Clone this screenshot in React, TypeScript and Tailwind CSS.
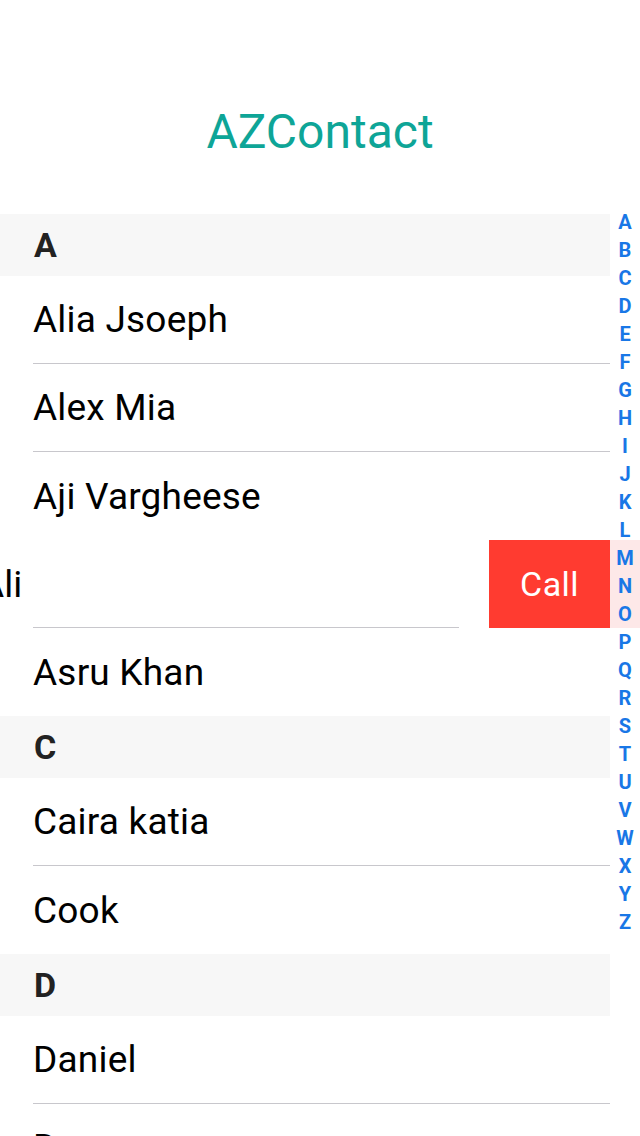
import React from 'react';

const letters = 'ABCDEFGHIJKLMNOPQRSTUVWXYZ'.split('');

function Header({ letter }: { letter: string }) {
  return (
    <div className="h-[62px] bg-[#f7f7f7] flex items-center pl-[34px]">
      <span className="text-[34px] font-bold text-[#222222] leading-none">{letter}</span>
    </div>
  );
}

function Row({ name, last }: { name: string; last?: boolean }) {
  return (
    <div className="h-[88px] pl-[33px] bg-white">
      <div className={`h-full flex items-center ${last ? '' : 'border-b border-[#c8c7cc]'}`}>
        <span className="text-[37px] text-black leading-none tracking-[0.2px]">{name}</span>
      </div>
    </div>
  );
}

function SwipedRow() {
  return (
    <div className="h-[88px] flex bg-white overflow-hidden">
      <div className="w-[459px] shrink-0 flex">
        <div className="w-[33px] shrink-0 flex items-center overflow-visible">
          <span className="text-[37px] text-black leading-none -ml-[20px]">Ali</span>
        </div>
        <div className="flex-1 border-b border-[#c8c7cc]" />
      </div>
      <div className="w-[30px] shrink-0" />
      <div className="flex-1 bg-[#ff3b30] flex items-center justify-center">
        <span className="text-[34px] text-white leading-none tracking-[0.4px]">Call</span>
      </div>
    </div>
  );
}

export default function App() {
  return (
    <div className="w-[640px] h-[1136px] bg-white overflow-hidden font-['Roboto',sans-serif]">
      <div className="h-[214px] flex items-center justify-center pt-[50px]">
        <h1 className="text-[48px] text-[#0ea597] leading-none">AZContact</h1>
      </div>
      <div className="flex">
        <div className="w-[610px] shrink-0">
          <Header letter="A" />
          <Row name="Alia Jsoeph" />
          <Row name="Alex Mia" />
          <div className="pl-[33px]">
            <div className="h-0 border-t border-[#c8c7cc] -mt-px" />
          </div>
          <Row name="Aji Vargheese" last />
          <SwipedRow />
          <Row name="Asru Khan" last />
          <Header letter="C" />
          <Row name="Caira katia" />
          <Row name="Cook" last />
          <Header letter="D" />
          <Row name="Daniel" />
          <Row name="Dave" />
        </div>
        <div className="relative w-[30px] shrink-0">
          <div className="absolute left-0 right-0 top-[326px] h-[88px] bg-[#fde8e8]" />
          <div className="relative flex flex-col items-center -mt-[6px]">
            {letters.map((l) => (
              <div
                key={l}
                className="w-full h-[28px] flex items-center justify-center text-[20px] font-bold text-[#1977e6] leading-none"
              >
                {l}
              </div>
            ))}
          </div>
        </div>
      </div>
    </div>
  );
}
